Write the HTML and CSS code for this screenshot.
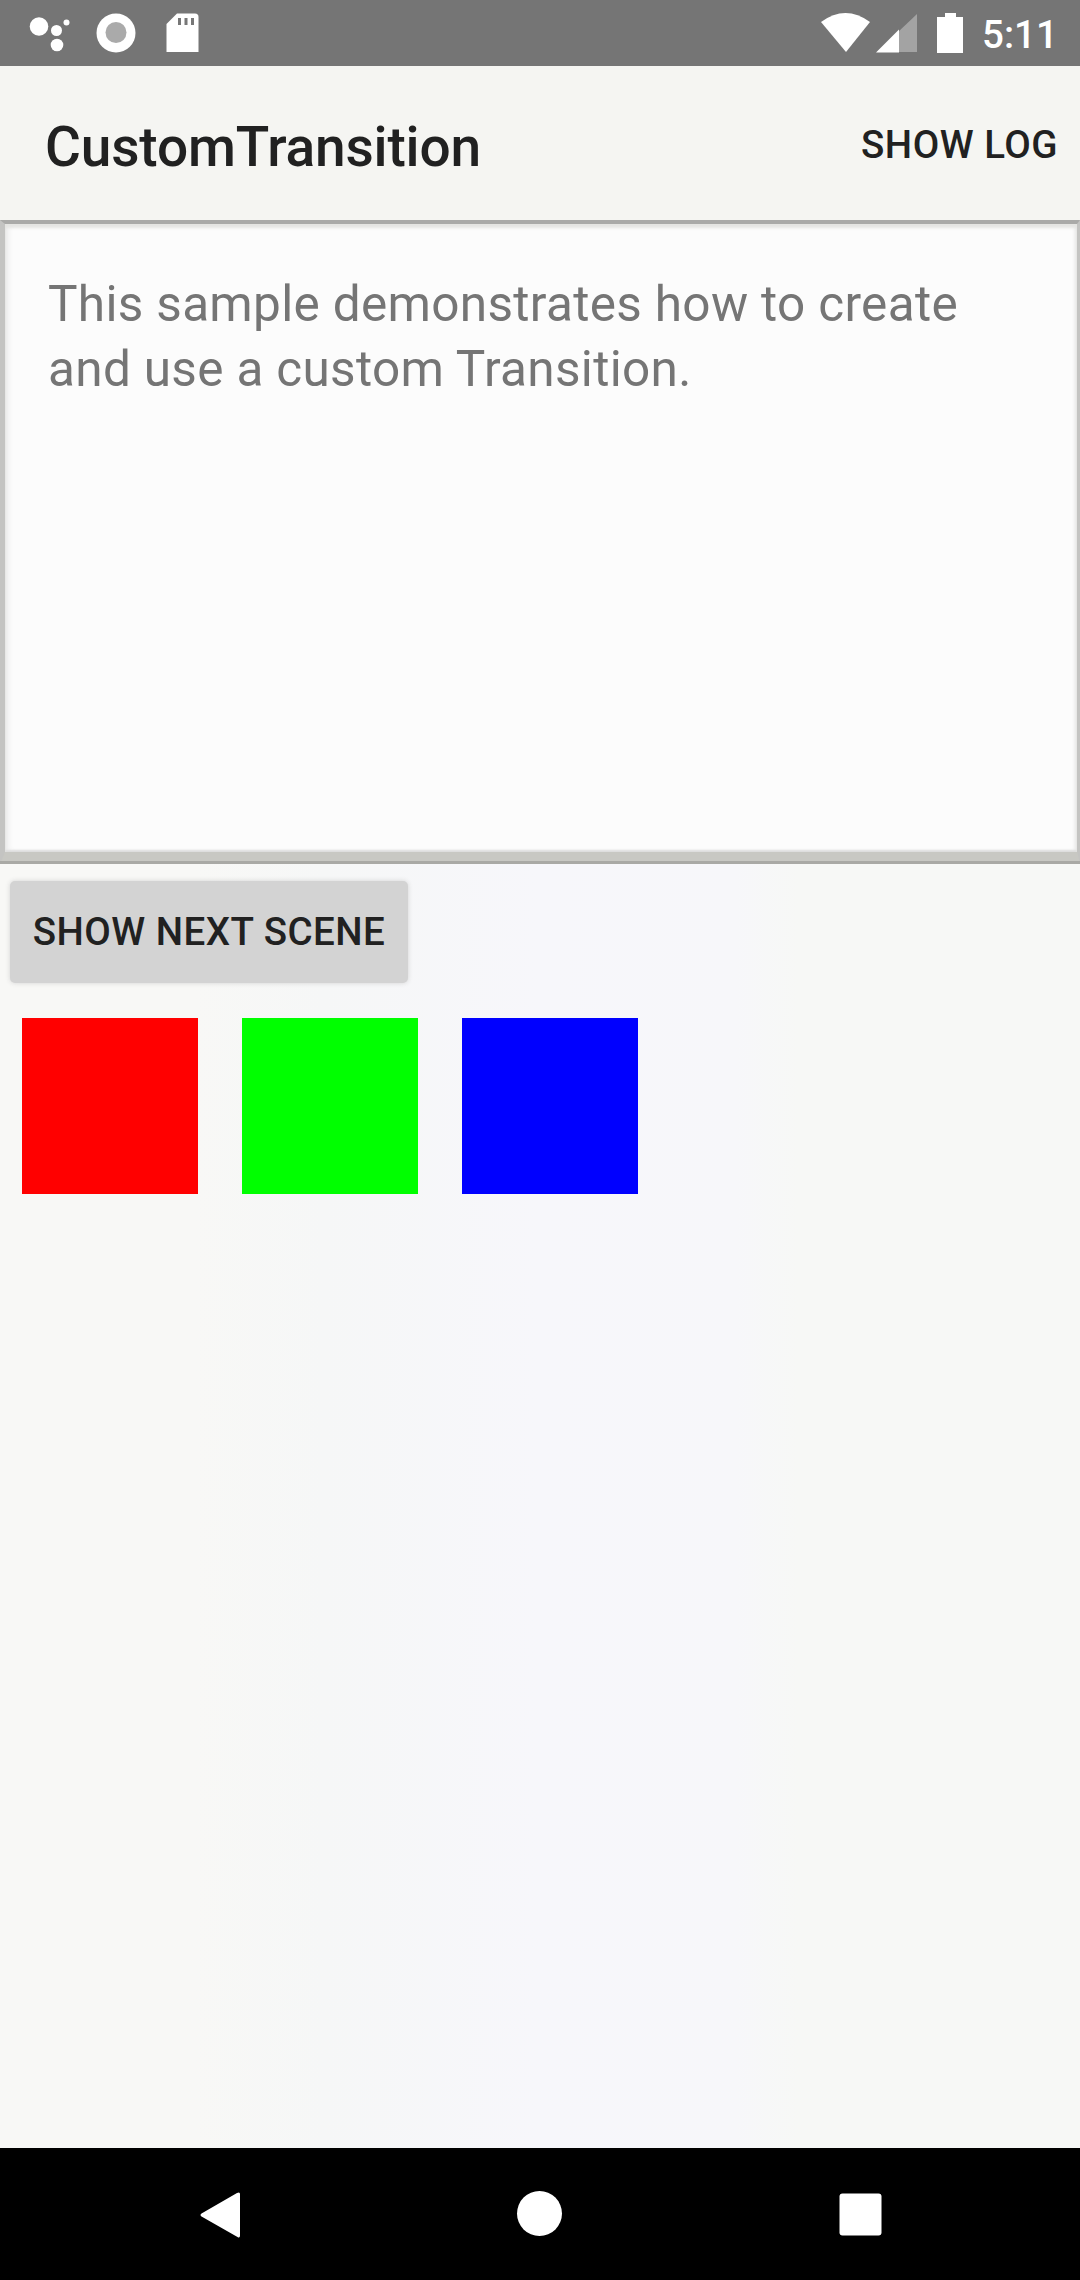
FILE: index.html
```html
<!DOCTYPE html>
<html lang="en">
<head>
<meta charset="utf-8">
<title>CustomTransition</title>
<link rel="stylesheet" href="styles.css">
</head>
<body>
<div class="screen">
  <header class="status">
    <svg class="status-icons" width="210" height="66" viewBox="0 0 210 66" fill="#fff">
      <circle cx="39" cy="26.500" r="9.300"/><circle cx="56.500" cy="30.500" r="5.500"/><circle cx="66.500" cy="22.500" r="3"/><circle cx="57" cy="45" r="6.300"/>
      <circle cx="116" cy="33" r="19.500"/><circle cx="116" cy="32.500" r="10.500" fill="#aaa"/>
      <path d="M177 13.500h18q3.500 0 3.500 3.500v35h-32V24z"/>
      <path d="M178 18h3v7h-3zM184.500 18h3v7h-3zM191 18h3v7h-3z" fill="#777"/>
    </svg>
    <svg class="status-icons" width="150" height="66" viewBox="0 0 150 66" fill="#fff">
      <path d="M1 22Q25.500 4 50 22L26 52z"/>
      <path d="M57 52 97 14v38z" fill="#a3a3a3"/><path d="M56 52.500 79 29.500v23z"/>
      <path d="M125 13h11v4h7v36h-26V17h8z"/>
    </svg>
    <span class="clock">5:11</span>
  </header>
  <div class="appbar">
    <h1 class="title">CustomTransition</h1>
    <button class="action">SHOW LOG</button>
  </div>
  <section class="intro"><p class="intro-text">This sample demonstrates how to create<br>and use a custom Transition.</p></section>
  <main class="content">
    <button class="next">SHOW NEXT SCENE</button>
    <div class="scene">
      <div class="box red"></div>
      <div class="box green"></div>
      <div class="box blue"></div>
    </div>
  </main>
  <nav class="navbar">
    <svg class="nav-icon" viewBox="0 0 50 50"><path d="M5.500 27.500Q3.500 26 5.500 24.500L41 4Q44 2.500 44 5v41.500q0 3-2.500 1.500z"/></svg>
    <svg class="nav-icon" viewBox="0 0 50 50"><circle cx="23.500" cy="24.500" r="22.500"/></svg>
    <svg class="nav-icon" viewBox="0 0 50 50"><rect x="3.500" y="4.500" width="42" height="42" rx="3"/></svg>
  </nav>
</div>
</body>
</html>
```
FILE: styles.css
```css
* { box-sizing: border-box; }
body { margin: 0; font-family: Roboto, sans-serif; color: #212121; }
button { font: inherit; color: inherit; border: 0; background: none; padding: 0; white-space: nowrap; }
.screen { width: 1080px; height: 2280px; display: flex; flex-direction: column; background: #f8f8f7; }
.status { height: 66px; flex: none; display: flex; background: #757575; color: #fff; }
.status-icons { flex: none; display: block; }
.status-icons + .status-icons { margin-left: 610px; }
.clock { margin-left: 12px; font-size: 38.500px; font-weight: 500; line-height: 69px; }
.appbar { height: 154px; flex: none; display: flex; align-items: center; justify-content: space-between; padding: 0 22px 0 45px; background: #f5f5f2; }
.title { margin: 0; padding-top: 7px; font-size: 55px; font-weight: 500; line-height: 64px; letter-spacing: -0.15px; }
.action { font-size: 38.500px; font-weight: 500; line-height: 45px; padding-top: 2px; letter-spacing: 0.5px; }
.intro { height: 644px; flex: none; padding: 48px 43px; background: #fcfcfc; border: solid #c4c4c2; border-width: 4px 3px 12px 5px; border-top-color: #aaaaa8; border-bottom-color: #c8c8c3; box-shadow: inset 0 4px 3px #e5e5e2, inset 0 -2px 2px #ddd, inset 4px 0 5px #eee, inset -3px 0 3px #eee; }
.intro-text { margin: 0; font-size: 49.500px; line-height: 65px; letter-spacing: 0.32px; color: #757575; white-space: nowrap; }
.content { flex: 1; border-top: 3px solid #a9a9a5; margin-top: -3px; padding: 17px 10px; background: linear-gradient(90deg, #f8f8f6 0%, #f8f8f6 18%, #f6f7f7 30%, #f7f7fb 50%, #f7f7fa 68%, #f7f8f6 74%); }
.next { display: block; width: 398px; height: 102px; padding-bottom: 2px; border-radius: 5px; background: #d3d3d3; font-size: 38.500px; font-weight: 500; letter-spacing: 0.48px; box-shadow: 0 0 5px #d3d3d3; }
.scene { display: flex; gap: 44px; padding: 35px 12px; }
.box { width: 176px; height: 176px; }
.red { background: #f00; }
.green { background: #0f0; }
.blue { background: #00f; }
.navbar { height: 132px; flex: none; display: flex; justify-content: space-between; align-items: center; padding: 0 194px 0 196px; background: #000; }
.nav-icon { width: 50px; height: 50px; fill: #fff; }
```
